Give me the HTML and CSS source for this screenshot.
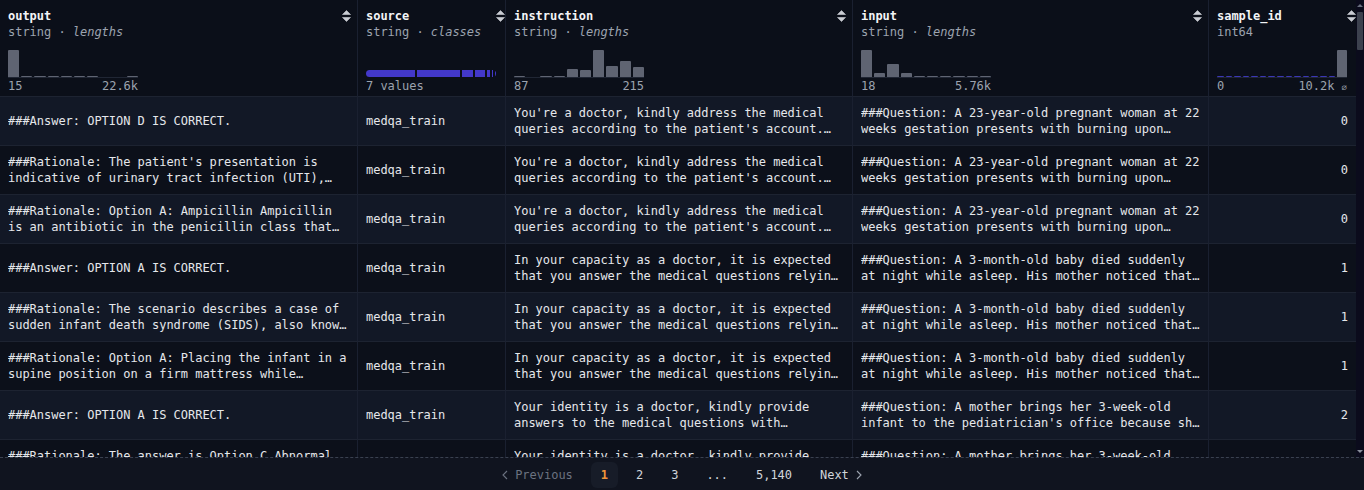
FILE: index.html
```html
<!DOCTYPE html>
<html lang="en">
<head>
<meta charset="utf-8">
<title>Dataset viewer</title>
<link rel="stylesheet" href="styles.css">
</head>
<body>
<div class="viewer">
  <div class="top">
    <div class="table-wrap">
      <div class="grid">
        <!-- header -->
        <div class="hcell">
          <div class="hinfo">
            <div class="hname">output</div>
            <div class="htype">string · <i>lengths</i></div>
            <div class="hist">
              <span class="bar" style="height:27px"></span><span class="bar" style="height:1px"></span><span class="bar" style="height:1px"></span><span class="bar" style="height:1px"></span><span class="bar" style="height:1px"></span><span class="bar" style="height:1px"></span><span class="bar" style="height:1px"></span><span class="bar" style="height:0px"></span><span class="bar" style="height:0px"></span><span class="bar" style="height:1px"></span>
            </div>
            <div class="hlabels"><span>15</span><span>22.6k</span></div>
          </div>
          <svg class="sort" width="9" height="12" viewBox="0 0 9 12"><path d="M4.5 0.5 L8.5 4.5 H0.5 Z M0.5 7.5 H8.5 L4.5 11.5 Z" fill="currentColor" stroke="currentColor" stroke-width="0.6" stroke-linejoin="round"/></svg>
        </div>
        <div class="hcell">
          <div class="hinfo">
            <div class="hname">source</div>
            <div class="htype">string · <i>classes</i></div>
            <div class="classes">
              <span class="seg" style="flex-grow:50"></span><span class="seg" style="flex-grow:44"></span><span class="seg" style="flex-grow:11"></span><span class="seg" style="flex-grow:10"></span><span class="seg" style="flex-grow:3"></span><span class="seg" style="flex-grow:1"></span><span class="seg" style="flex-grow:1"></span>
            </div>
            <div class="hlabels"><span>7 values</span></div>
          </div>
          <svg class="sort" width="9" height="12" viewBox="0 0 9 12"><path d="M4.5 0.5 L8.5 4.5 H0.5 Z M0.5 7.5 H8.5 L4.5 11.5 Z" fill="currentColor" stroke="currentColor" stroke-width="0.6" stroke-linejoin="round"/></svg>
        </div>
        <div class="hcell">
          <div class="hinfo">
            <div class="hname">instruction</div>
            <div class="htype">string · <i>lengths</i></div>
            <div class="hist">
              <span class="bar" style="height:1px"></span><span class="bar" style="height:0px"></span><span class="bar" style="height:1px"></span><span class="bar" style="height:1px"></span><span class="bar" style="height:8px"></span><span class="bar" style="height:7px"></span><span class="bar" style="height:27px"></span><span class="bar" style="height:11px"></span><span class="bar" style="height:16px"></span><span class="bar" style="height:10px"></span>
            </div>
            <div class="hlabels"><span>87</span><span>215</span></div>
          </div>
          <svg class="sort" width="9" height="12" viewBox="0 0 9 12"><path d="M4.5 0.5 L8.5 4.5 H0.5 Z M0.5 7.5 H8.5 L4.5 11.5 Z" fill="currentColor" stroke="currentColor" stroke-width="0.6" stroke-linejoin="round"/></svg>
        </div>
        <div class="hcell">
          <div class="hinfo">
            <div class="hname">input</div>
            <div class="htype">string · <i>lengths</i></div>
            <div class="hist">
              <span class="bar" style="height:27px"></span><span class="bar" style="height:4px"></span><span class="bar" style="height:13px"></span><span class="bar" style="height:4px"></span><span class="bar" style="height:1px"></span><span class="bar" style="height:1px"></span><span class="bar" style="height:1px"></span><span class="bar" style="height:1px"></span><span class="bar" style="height:1px"></span><span class="bar" style="height:1px"></span>
            </div>
            <div class="hlabels"><span>18</span><span>5.76k</span></div>
          </div>
          <svg class="sort" width="9" height="12" viewBox="0 0 9 12"><path d="M4.5 0.5 L8.5 4.5 H0.5 Z M0.5 7.5 H8.5 L4.5 11.5 Z" fill="currentColor" stroke="currentColor" stroke-width="0.6" stroke-linejoin="round"/></svg>
        </div>
        <div class="hcell last">
          <div class="hinfo">
            <div class="hname">sample_id</div>
            <div class="htype">int64</div>
            <div class="hist">
              <span class="bar blue"></span><span class="bar blue"></span><span class="bar blue"></span><span class="bar blue"></span><span class="bar blue"></span><span class="bar blue"></span><span class="bar blue"></span><span class="bar blue"></span><span class="bar blue"></span><span class="bar blue"></span><span class="bar blue"></span><span class="bar blue"></span><span class="bar blue"></span><span class="bar blue"></span><span class="bar wide" style="height:27px"></span>
            </div>
            <div class="hlabels"><span>0</span><span>10.2k <span class="null">⌀</span></span></div>
          </div>
          <svg class="sort" width="9" height="12" viewBox="0 0 9 12"><path d="M4.5 0.5 L8.5 4.5 H0.5 Z M0.5 7.5 H8.5 L4.5 11.5 Z" fill="currentColor" stroke="currentColor" stroke-width="0.6" stroke-linejoin="round"/></svg>
        </div>

        <!-- rows -->
        <div class="row odd">
          <div class="cell"><span class="txt">###Answer: OPTION D IS CORRECT.</span></div>
          <div class="cell"><span class="txt">medqa_train</span></div>
          <div class="cell"><span class="txt">You're a doctor, kindly address the medical queries according to the patient's account. Answer with the best option directly.</span></div>
          <div class="cell"><span class="txt">###Question: A 23-year-old pregnant woman at 22 weeks gestation presents with burning upon urination. She states it started 1 day ago and has been worsening despite drinking more water.</span></div>
          <div class="cell num last"><span class="txt">0</span></div>
        </div>
        <div class="row even">
          <div class="cell"><span class="txt">###Rationale: The patient's presentation is indicative of urinary tract infection (UTI), which is common during pregnancy.</span></div>
          <div class="cell"><span class="txt">medqa_train</span></div>
          <div class="cell"><span class="txt">You're a doctor, kindly address the medical queries according to the patient's account. Answer with the best option directly.</span></div>
          <div class="cell"><span class="txt">###Question: A 23-year-old pregnant woman at 22 weeks gestation presents with burning upon urination. She states it started 1 day ago and has been worsening despite drinking more water.</span></div>
          <div class="cell num last"><span class="txt">0</span></div>
        </div>
        <div class="row odd">
          <div class="cell"><span class="txt">###Rationale: Option A: Ampicillin Ampicillin is an antibiotic in the penicillin class that is commonly used to treat urinary tract infections.</span></div>
          <div class="cell"><span class="txt">medqa_train</span></div>
          <div class="cell"><span class="txt">You're a doctor, kindly address the medical queries according to the patient's account. Answer with the best option directly.</span></div>
          <div class="cell"><span class="txt">###Question: A 23-year-old pregnant woman at 22 weeks gestation presents with burning upon urination. She states it started 1 day ago and has been worsening despite drinking more water.</span></div>
          <div class="cell num last"><span class="txt">0</span></div>
        </div>
        <div class="row even">
          <div class="cell"><span class="txt">###Answer: OPTION A IS CORRECT.</span></div>
          <div class="cell"><span class="txt">medqa_train</span></div>
          <div class="cell"><span class="txt">In your capacity as a doctor, it is expected that you answer the medical questions relying on the patient's description.</span></div>
          <div class="cell"><span class="txt">###Question: A 3-month-old baby died suddenly at night while asleep. His mother noticed that he had died only after she awoke in the morning.</span></div>
          <div class="cell num last"><span class="txt">1</span></div>
        </div>
        <div class="row odd">
          <div class="cell"><span class="txt">###Rationale: The scenario describes a case of sudden infant death syndrome (SIDS), also known as crib death.</span></div>
          <div class="cell"><span class="txt">medqa_train</span></div>
          <div class="cell"><span class="txt">In your capacity as a doctor, it is expected that you answer the medical questions relying on the patient's description.</span></div>
          <div class="cell"><span class="txt">###Question: A 3-month-old baby died suddenly at night while asleep. His mother noticed that he had died only after she awoke in the morning.</span></div>
          <div class="cell num last"><span class="txt">1</span></div>
        </div>
        <div class="row even">
          <div class="cell"><span class="txt">###Rationale: Option A: Placing the infant in a supine position on a firm mattress while sleeping is recommended.</span></div>
          <div class="cell"><span class="txt">medqa_train</span></div>
          <div class="cell"><span class="txt">In your capacity as a doctor, it is expected that you answer the medical questions relying on the patient's description.</span></div>
          <div class="cell"><span class="txt">###Question: A 3-month-old baby died suddenly at night while asleep. His mother noticed that he had died only after she awoke in the morning.</span></div>
          <div class="cell num last"><span class="txt">1</span></div>
        </div>
        <div class="row odd">
          <div class="cell"><span class="txt">###Answer: OPTION A IS CORRECT.</span></div>
          <div class="cell"><span class="txt">medqa_train</span></div>
          <div class="cell"><span class="txt">Your identity is a doctor, kindly provide answers to the medical questions with consideration of the patient's explanation.</span></div>
          <div class="cell"><span class="txt">###Question: A mother brings her 3-week-old infant to the pediatrician's office because she is concerned about his feeding habits.</span></div>
          <div class="cell num last"><span class="txt">2</span></div>
        </div>
        <div class="row even">
          <div class="cell"><span class="txt">###Rationale: The answer is Option C Abnormal migration of ventral pancreatic bud.</span></div>
          <div class="cell"><span class="txt">medqa_train</span></div>
          <div class="cell"><span class="txt">Your identity is a doctor, kindly provide answers to the medical questions with consideration of the patient's explanation.</span></div>
          <div class="cell"><span class="txt">###Question: A mother brings her 3-week-old infant to the pediatrician's office because she is concerned about his feeding habits.</span></div>
          <div class="cell num last"><span class="txt">2</span></div>
        </div>
      </div>
    </div>
    <div class="scrollbar">
      <span class="arrow up"></span>
      <span class="thumb"></span>
      <span class="spacer"></span>
      <span class="arrow down"></span>
    </div>
  </div>
  <nav class="pager">
    <span class="pitem prev">
      <svg width="6" height="10" viewBox="0 0 6 10"><path d="M5 1 L1 5 L5 9" fill="none" stroke="currentColor" stroke-width="1.1"/></svg>
      Previous
    </span>
    <span class="pitem active">1</span>
    <span class="pitem">2</span>
    <span class="pitem">3</span>
    <span class="pitem">...</span>
    <span class="pitem">5,140</span>
    <span class="pitem next">
      Next
      <svg width="6" height="10" viewBox="0 0 6 10"><path d="M1 1 L5 5 L1 9" fill="none" stroke="currentColor" stroke-width="1.1"/></svg>
    </span>
  </nav>
</div>
</body>
</html>
```

FILE: styles.css
```css
* { box-sizing: border-box; }

html, body {
  margin: 0;
  padding: 0;
  background: #0b0f19;
  overflow: hidden;
}

body {
  font-family: "DejaVu Sans Mono", "Liberation Mono", monospace;
  font-size: 12px;
  line-height: 16px;
  letter-spacing: -0.024px;
  color: #e5e7eb;
}

.viewer {
  width: 1364px;
  height: 490px;
  display: flex;
  flex-direction: column;
}

.top {
  display: flex;
  height: 457px;
}

.table-wrap {
  width: 1356px;
  height: 457px;
  overflow: hidden;
}

.grid {
  display: grid;
  grid-template-columns: 358px 148px 347px 356px 147px;
}

/* header */
.hcell {
  display: flex;
  justify-content: space-between;
  align-items: flex-start;
  padding: 8px 6px 2px 8px;
  height: 97px;
  background: #0b0f19;
  border-right: 1px solid #1a2030;
  border-bottom: 1px solid #1d2331;
}
.hcell.last { border-right: none; }

.hinfo {
  display: flex;
  flex-direction: column;
}

.hname {
  font-weight: bold;
  color: #f3f4f6;
  height: 16px;
}

.htype {
  color: #9ca3af;
  height: 16px;
}
.htype i { font-style: italic; }

.sort {
  color: #c9ccd3;
  margin-top: 2px;
  flex: none;
}

.hist {
  margin-top: 10px;
  width: 130px;
  height: 28px;
  display: flex;
  align-items: flex-end;
  gap: 2px;
  border-bottom: 1px solid #202634;
}

.bar {
  flex: 1 1 0;
  background: #5f6472;
  border-radius: 1px 1px 0 0;
}
.bar.blue {
  height: 1px;
  background: #3b37b5;
}
.bar.wide {
  flex: 0 0 10px;
}

.classes {
  margin-top: 30px;
  margin-bottom: 1px;
  width: 130px;
  height: 7px;
  display: flex;
  gap: 2px;
  border-radius: 4px;
  overflow: hidden;
}
.seg {
  flex-basis: 0;
  background: #4338ca;
}

.hlabels {
  width: 130px;
  height: 16px;
  display: flex;
  justify-content: space-between;
  color: #9ca3af;
}

.null {
  font-family: "DejaVu Sans", sans-serif;
  font-size: 9px;
}

/* rows */
.row { display: contents; }

.cell {
  height: 49px;
  padding: 8px;
  display: flex;
  align-items: center;
  border-right: 1px solid #1a2030;
  border-bottom: 1px solid #1d2331;
  color: #e5e7eb;
}
.cell.last { border-right: none; }
.cell.num { justify-content: flex-end; }

.row.odd .cell { background: #121826; }
.row.even .cell { background: #0c101a; }

.txt {
  display: -webkit-box;
  -webkit-box-orient: vertical;
  -webkit-line-clamp: 2;
  overflow: hidden;
  white-space: normal;
}

/* scrollbar */
.scrollbar {
  width: 8px;
  height: 457px;
  background: #0b0b1c;
  display: flex;
  flex-direction: column;
  align-items: center;
}
.arrow {
  width: 0;
  height: 0;
  border-left: 3px solid transparent;
  border-right: 3px solid transparent;
}
.arrow.up {
  margin-top: 4px;
  border-bottom: 3px solid #6b7080;
}
.arrow.down {
  margin-bottom: 4px;
  border-top: 3px solid #8a8f9c;
}
.thumb {
  margin-top: 5px;
  width: 6px;
  height: 38px;
  background: #3c414e;
  border-radius: 1px;
}
.spacer { flex: 1; }

/* pagination */
.pager {
  height: 33px;
  padding-top: 1px;
  border-top: 1px dashed #3a4150;
  background: #10141f;
  display: flex;
  justify-content: center;
  align-items: center;
  gap: 8px;
}

.pitem {
  height: 26px;
  padding: 0 10px;
  display: flex;
  align-items: center;
  gap: 7px;
  color: #d1d5db;
  border-radius: 6px;
}
.pitem.prev { color: #6b7280; }
.pitem.prev svg { color: #6b7280; }
.pitem.next svg { color: #9ca3af; }
.pitem.active {
  background: #171c28;
  color: #f0953a;
  font-weight: bold;
}
```
